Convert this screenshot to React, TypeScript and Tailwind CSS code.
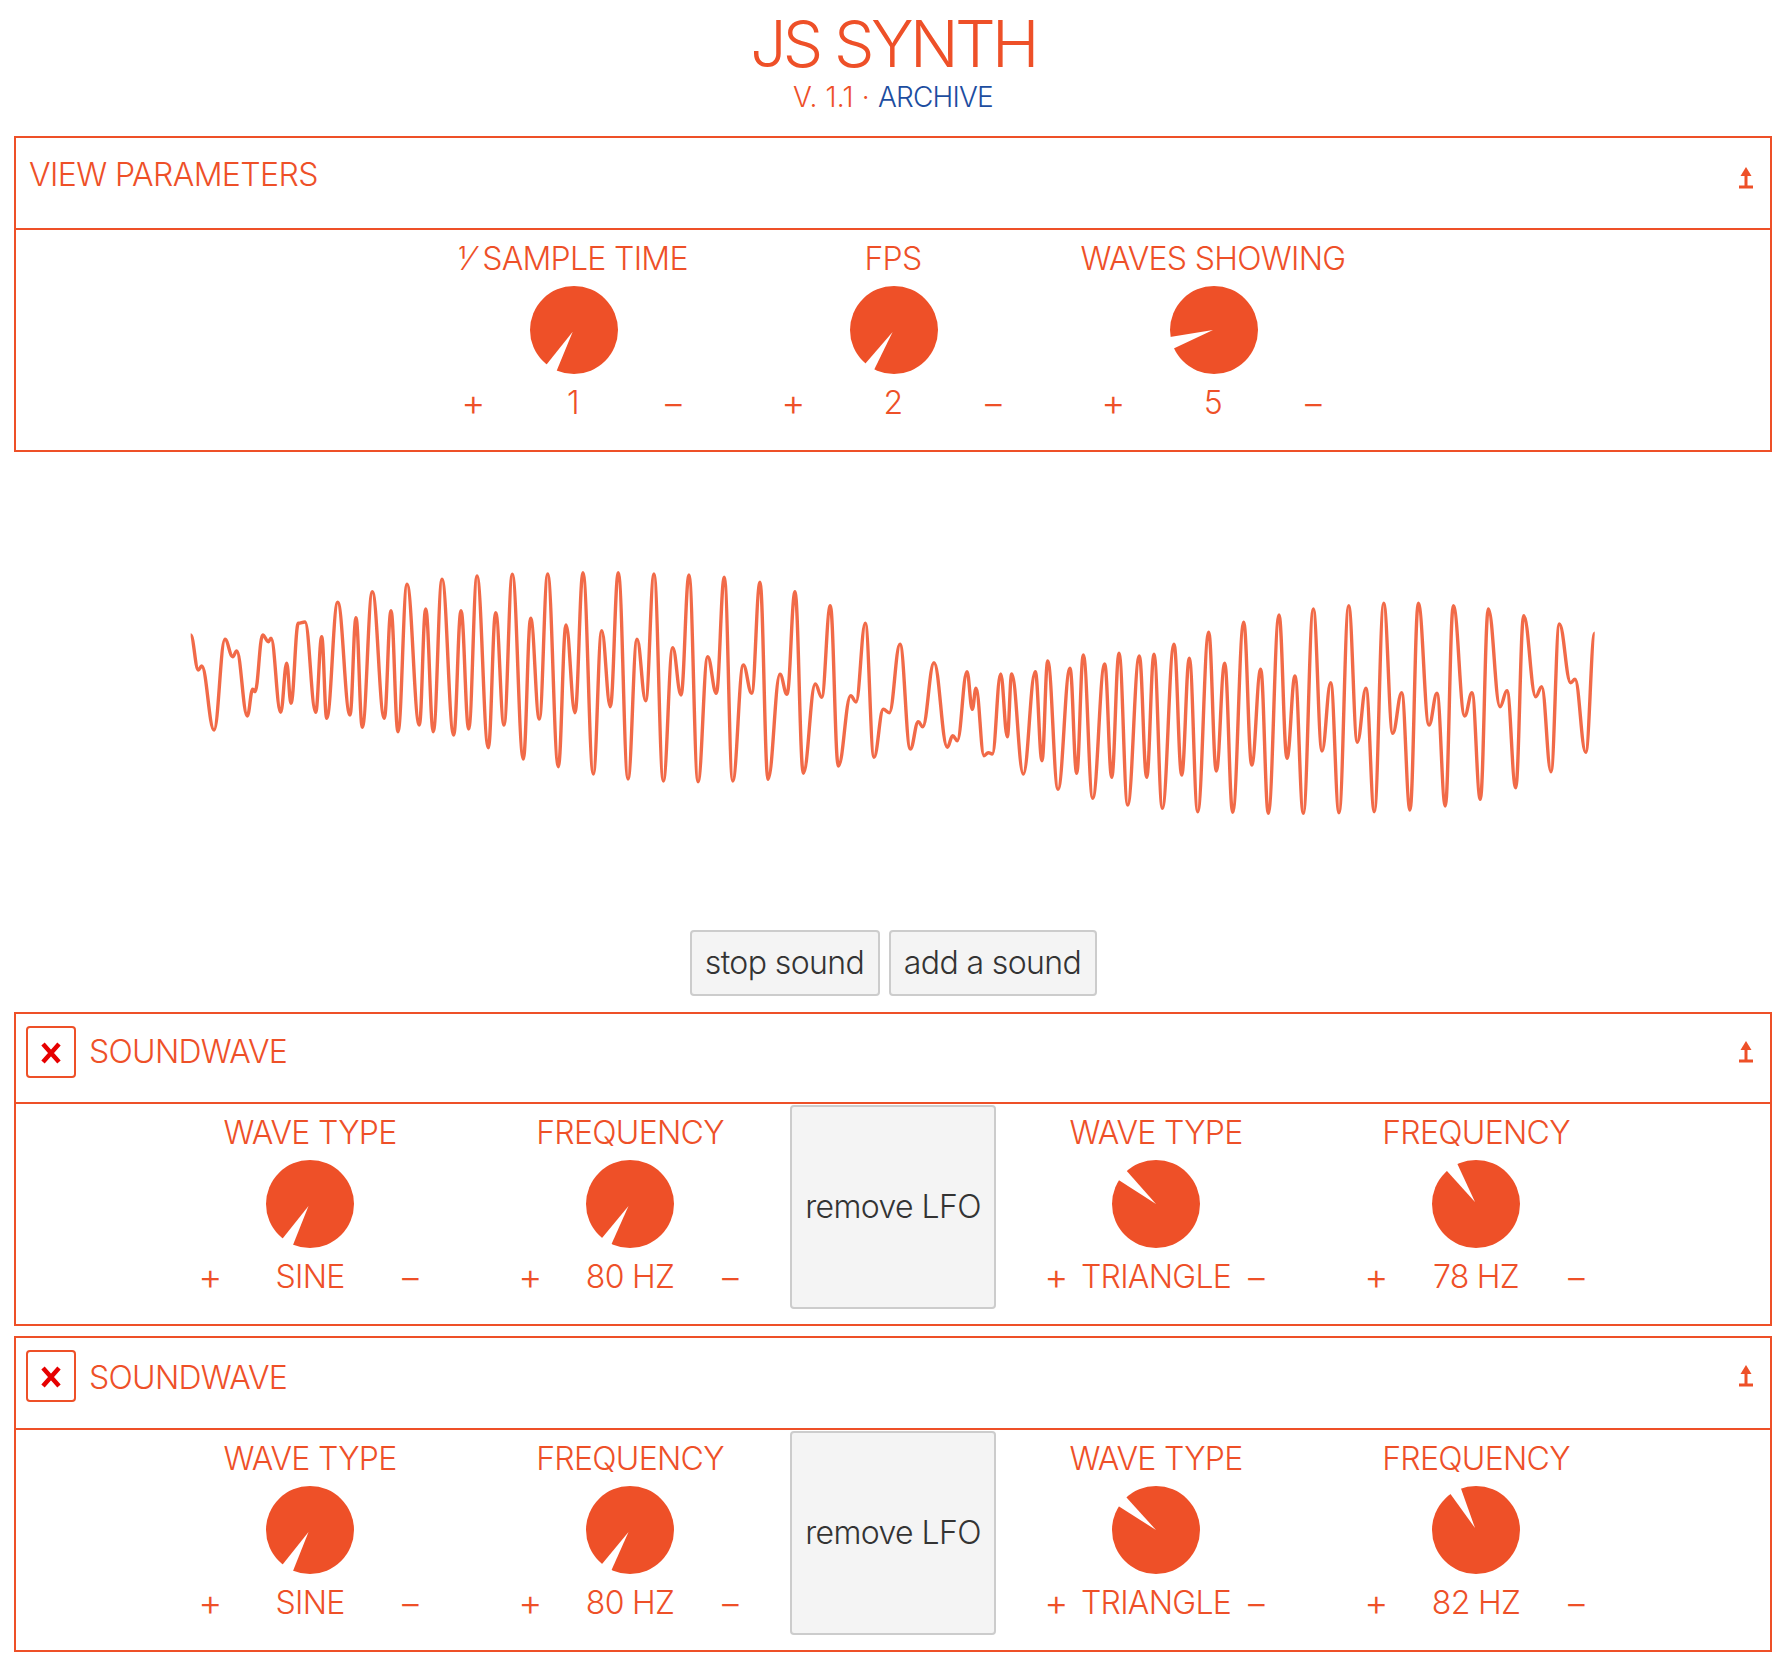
import React from "react";

const Z3: number[][] = [[62,255],[85,360],[95,348],[132,540],[165,268],[188,320],[200,303],[232,498],[248,418],[255,425],[278,255],[295,275],[303,265],[332,487],[350,340],[363,460],[385,220],[405,216],[437,487],[455,260],[470,505],[503,157],[540,495],[558,203],[577,532],[607,125],[643,505],[663,182],[684,545],[711,103],[748,525],[767,177],[790,545],[816,88],[851,555],[873,182],[896,537],[921,78],[955,593],[977,188],[1002,525],[1027,73],[1060,627],[1082,205],[1108,507],[1133,72]];
const Z4: number[][] = [[25,650],[48,225],[75,488],[99,68],[130,672],[155,242],[181,470],[205,68],[234,687],[261,268],[287,452],[312,72],[340,693],[368,293],[393,435],[417,75],[444,695],[473,320],[499,430],[523,82],[548,693],[580,345],[605,430],[630,97],[654,688],[690,373],[711,433],[735,125],[760,670],[796,402],[815,442],[841,167],[865,648],[902,437],[918,456],[946,220],[972,622],[1000,478],[1018,488],[1050,283],[1081,597],[1105,515],[1118,530]];
const Z5: number[][] = [[12,338],[52,592],[68,557],[82,572],[111,365],[127,478],[138,415],[162,617],[175,608],[187,612],[212,372],[232,560],[245,372],[280,672],[316,365],[336,632],[353,333],[384,718],[420,355],[440,670],[460,315],[488,745],[524,342],[545,682],[567,310],[593,765],[628,318],[650,682],[672,313],[697,775],[732,283],[755,675],[778,325],[803,785],[836,247],[859,663],[884,340],[908,787],[941,217],[965,645]];
const Z6: number[][] = [[2,358],[25,790],[57,195],[81,625],[105,378],[130,790],[160,177],[186,603],[212,398],[237,788],[266,167],[292,577],[318,415],[343,785],[371,160],[398,550],[425,428],[450,780],[475,160],[507,525],[531,430],[556,768],[580,167],[614,498],[636,428],[661,748],[685,177],[720,470],[741,422],[767,713],[791,197],[827,440],[845,410],[873,665],[898,222],[932,398],[945,388],[977,607],[1004,250]];

const WAVE_TOP = 452;
function wavePath(): string {
  const pts: number[][] = [];
  const add = (list: number[][], x0: number) => {
    for (const [x, y] of list) pts.push([x0 + x / 3, 550 + y / 3 - WAVE_TOP]);
  };
  add(Z3, 170);
  add(Z4, 550);
  add(Z5, 930);
  add(Z6, 1260);
  let d = `M${pts[0][0].toFixed(1)} ${pts[0][1].toFixed(1)}`;
  for (let i = 1; i < pts.length; i++) {
    const [ax, ay] = pts[i - 1];
    const [bx, by] = pts[i];
    const k = (bx - ax) * 0.4;
    d += `C${(ax + k).toFixed(1)} ${ay.toFixed(1)} ${(bx - k).toFixed(1)} ${by.toFixed(1)} ${bx.toFixed(1)} ${by.toFixed(1)}`;
  }
  return d;
}

type Wedge = { tip: [number, number]; a: [number, number]; b: [number, number] };

function Knob({ tip, a, b }: Wedge) {
  const ext = (p: [number, number]) => `${tip[0] + (p[0] - tip[0]) * 1.5},${tip[1] + (p[1] - tip[1]) * 1.5}`;
  return (
    <svg width="88" height="88" viewBox="0 0 88 88" className="block">
      <circle cx="44" cy="44" r="44" fill="#ee5028" />
      <polygon points={`${tip[0]},${tip[1]} ${ext(a)} ${ext(b)}`} fill="#fff" />
    </svg>
  );
}

function Group({ label, value, wedge, knobClass = "" }: { label: React.ReactNode; value: string; wedge: Wedge; knobClass?: string }) {
  return (
    <div className="w-[320px] shrink-0 flex flex-col items-center pt-[9px]">
      <div className="h-[40px] leading-[40px] text-[32px] tracking-[-0.7px]">{label}</div>
      <div className={`mt-[7px] ${knobClass}`}>
        <Knob {...wedge} />
      </div>
      <div className="mt-[9px] w-[240px] h-[40px] grid grid-cols-[40px_160px_40px] text-center leading-[40px] text-[32px] tracking-[-0.7px]">
        <span className="text-[37px]">+</span>
        <span>{value}</span>
        <span className="text-[37px]">−</span>
      </div>
    </div>
  );
}

function Collapse() {
  return (
    <svg width="14" height="22" viewBox="0 0 14 22" className="block">
      <path d="M7 0 L1.5 9 L12.5 9 Z" fill="#ee5028" />
      <rect x="5.5" y="6" width="3" height="14" fill="#ee5028" />
      <rect x="0" y="18.5" width="14" height="3" fill="#ee5028" />
    </svg>
  );
}

function Btn({ children, className }: { children: React.ReactNode; className: string }) {
  return (
    <button className={`border-2 border-[#cccccc] rounded-[4px] bg-[#f4f4f4] text-[#333333] text-[32px] tracking-[-0.6px] font-[350] ${className}`}>
      {children}
    </button>
  );
}

function Soundwave({ headH, titleMt, k3, k4, hz, mt }: { headH: string; titleMt: string; k3: Wedge; k4: Wedge; hz: string; mt: string }) {
  const s: Wedge = { tip: [42.5, 46], a: [17, 78], b: [27, 85] };
  const f: Wedge = { tip: [42.5, 46], a: [16, 78], b: [26, 83] };
  return (
    <section className={`border-2 border-[#ee5028] ${mt}`}>
      <div className={`${headH} flex items-start pl-[10px] pr-[17px] pt-[12px] border-b-2 border-[#ee5028]`}>
        <div className="w-[50px] h-[52px] border-2 border-[#ee5028] rounded-[4px] flex items-center justify-center">
          <svg width="22" height="22" viewBox="0 0 22 22" className="mt-[2px]">
            <path d="M3 2 L19 20 M19 2 L3 20" stroke="#e60000" strokeWidth="4.5" fill="none" />
          </svg>
        </div>
        <div className={`ml-[13px] text-[32px] leading-[40px] tracking-[-0.7px] ${titleMt}`}>SOUNDWAVE</div>
        <div className="ml-auto mt-[15px]">
          <Collapse />
        </div>
      </div>
      <div className="h-[220px] flex justify-center">
        <Group label="WAVE TYPE" value="SINE" wedge={s} />
        <Group label="FREQUENCY" value="80 HZ" wedge={f} />
        <Btn className="w-[206px] h-[204px] mt-[1px]">remove LFO</Btn>
        <Group label="WAVE TYPE" value="TRIANGLE" wedge={k3} />
        <Group label="FREQUENCY" value={hz} wedge={k4} />
      </div>
    </section>
  );
}

export default function App() {
  return (
    <div className="min-h-[1672px] bg-white pl-[14px] pr-[16px] text-[#ee5028] font-[350]" style={{ fontFamily: "Inter, 'DejaVu Sans', sans-serif" }}>
      <header className="h-[136px] flex flex-col items-center">
        <h1 className="text-[64px] leading-[76px] mt-[6px] tracking-[-3.6px] font-light">JS SYNTH</h1>
        <div className="text-[28px] leading-[32px] mt-[-1px]">
          <span className="tracking-[0.2px]">V. 1.1 · </span>
          <span className="text-[#1c4d9f] tracking-[-0.8px]">ARCHIVE</span>
        </div>
      </header>

      <section className="border-2 border-[#ee5028]">
        <div className="h-[92px] flex items-start justify-between pl-[13px] pr-[17px] pt-[17px] border-b-2 border-[#ee5028]">
          <div className="text-[32px] leading-[40px] tracking-[-0.6px]">VIEW PARAMETERS</div>
          <div className="mt-[12px]">
            <Collapse />
          </div>
        </div>
        <div className="h-[220px] flex justify-center">
          <Group
            label={<><span className="mr-[2px]">⅟</span> SAMPLE TIME</>}
            value="1"
            knobClass="ml-[2px]"
            wedge={{ tip: [42.7, 45.7], a: [16.7, 78.3], b: [26.7, 84.7] }}
          />
          <Group label="FPS" value="2" knobClass="ml-[2px]" wedge={{ tip: [42.6, 46], a: [15, 78], b: [24, 84] }} />
          <Group label="WAVES SHOWING" value="5" knobClass="ml-[2px]" wedge={{ tip: [43, 44], a: [0.7, 51], b: [4.6, 62] }} />
        </div>
      </section>

      <svg width="1758" height="478" viewBox="14 0 1758 478" className="block blur-[0.5px]">
        <path d={wavePath()} fill="none" stroke="#ee5028" strokeOpacity="0.85" strokeWidth="3.4" strokeLinejoin="round" />
      </svg>

      <div className="flex justify-center gap-[9px] h-[66px]">
        <Btn className="w-[190px] h-[66px]">stop sound</Btn>
        <Btn className="w-[208px] h-[66px]">add a sound</Btn>
      </div>

      <Soundwave
        mt="mt-[16px]"
        headH="h-[90px]"
        titleMt="mt-[6px]"
        hz="78 HZ"
        k3={{ tip: [44, 44], a: [6.6, 20], b: [14.5, 10.7] }}
        k4={{ tip: [43, 42], a: [14.7, 10.7], b: [25.4, 4] }}
      />
      <Soundwave
        mt="mt-[10px]"
        headH="h-[92px]"
        titleMt="mt-[8px]"
        hz="82 HZ"
        k3={{ tip: [44, 44], a: [6.6, 20.3], b: [14.5, 11.5] }}
        k4={{ tip: [43, 42], a: [18.7, 8.3], b: [29, 2.6] }}
      />
    </div>
  );
}
